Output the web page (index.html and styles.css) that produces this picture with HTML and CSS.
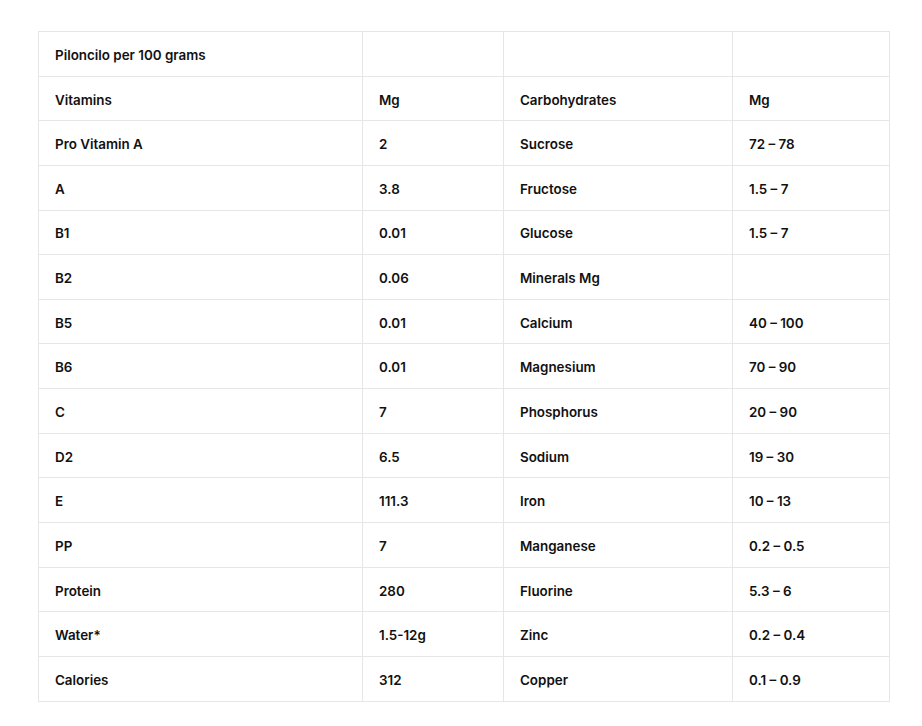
FILE: index.html
```html
<!DOCTYPE html>
<html>
<head>
<meta charset="utf-8">
<link rel="stylesheet" href="styles.css">
</head>
<body>
<div class="page">
<table class="nutrition">
<colgroup><col class="c1"><col class="c2"><col class="c3"><col class="c4"></colgroup>
<tbody>
<tr><td>Piloncilo per 100 grams</td><td></td><td></td><td></td></tr>
<tr><td>Vitamins</td><td>Mg</td><td>Carbohydrates</td><td>Mg</td></tr>
<tr><td>Pro Vitamin A</td><td>2</td><td>Sucrose</td><td>72 – 78</td></tr>
<tr><td>A</td><td>3.8</td><td>Fructose</td><td>1.5 – 7</td></tr>
<tr><td>B1</td><td>0.01</td><td>Glucose</td><td>1.5 – 7</td></tr>
<tr><td>B2</td><td>0.06</td><td>Minerals Mg</td><td></td></tr>
<tr><td>B5</td><td>0.01</td><td>Calcium</td><td>40 – 100</td></tr>
<tr><td>B6</td><td>0.01</td><td>Magnesium</td><td>70 – 90</td></tr>
<tr><td>C</td><td>7</td><td>Phosphorus</td><td>20 – 90</td></tr>
<tr><td>D2</td><td>6.5</td><td>Sodium</td><td>19 – 30</td></tr>
<tr><td>E</td><td>111.3</td><td>Iron</td><td>10 – 13</td></tr>
<tr><td>PP</td><td>7</td><td>Manganese</td><td>0.2 – 0.5</td></tr>
<tr><td>Protein</td><td>280</td><td>Fluorine</td><td>5.3 – 6</td></tr>
<tr><td>Water*</td><td>1.5-12g</td><td>Zinc</td><td>0.2 – 0.4</td></tr>
<tr><td>Calories</td><td>312</td><td>Copper</td><td>0.1 – 0.9</td></tr>
</tbody>
</table>
</div>
</body>
</html>
```
FILE: styles.css
```css
html, body {
  margin: 0;
  padding: 0;
  background: #ffffff;
}
.page {
  padding: 31px 33px 0 38px;
}
.nutrition {
  border-collapse: collapse;
  width: 851px;
  table-layout: fixed;
  font-family: Inter, "Liberation Sans", sans-serif;
  font-size: 13.4px;
  font-weight: 600;
  color: #111111;
}
.c1 { width: 324px; }
.c2 { width: 141px; }
.c3 { width: 229px; }
.c4 { width: 157px; }
.nutrition tr {
  height: 44.65px;
}
.nutrition td {
  border: 1px solid #e6e6e6;
  padding: 13.9px 16px 10.1px 16px;
  line-height: 19.6px;
  text-align: left;
  vertical-align: middle;
}
```
